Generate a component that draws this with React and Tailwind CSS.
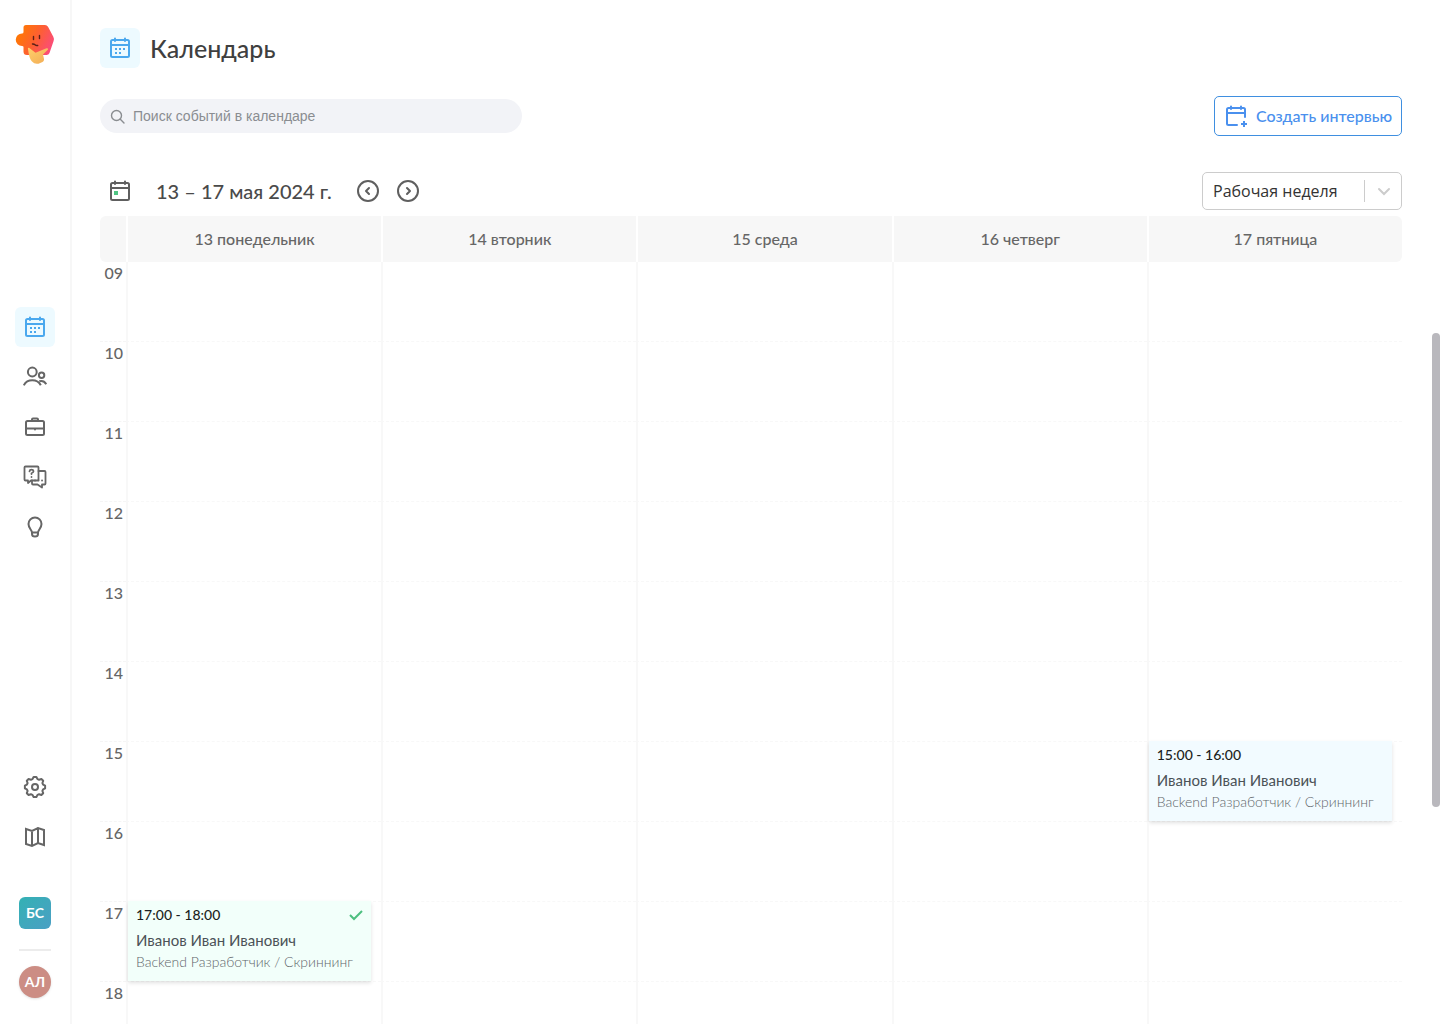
import clsx from "clsx";

const strokeProps = {
  width: 24,
  height: 24,
  viewBox: "0 0 24 24",
  fill: "none",
  stroke: "currentColor",
  strokeWidth: 2,
  strokeLinecap: "round",
  strokeLinejoin: "round",
  "aria-hidden": true,
};

function CalendarIcon() {
  return (
    <svg {...strokeProps}>
      <rect x="3" y="4" width="18" height="17" rx="1.5" />
      <path d="M3 9h18M7 2.500V5M17 2.500V5" />
      <path d="M7 13h2M11 13h2M15 13h2M7 17h2M11 17h2" strokeLinecap="butt" />
    </svg>
  );
}

function TodayIcon() {
  return (
    <svg {...strokeProps}>
      <rect x="3" y="4" width="18" height="17" rx="1.5" />
      <path d="M3 9h18M7 2.500V5M17 2.500V5" />
      <rect x="6" y="12" width="4" height="4" fill="#4fc583" stroke="none" />
    </svg>
  );
}

function CalendarAddIcon() {
  return (
    <svg {...strokeProps}>
      <path d="M13 21H4.500Q3 21 3 19.500V5.500Q3 4 4.500 4h15Q21 4 21 5.500V13" />
      <path d="M3 9h18M7 2.500V5M17 2.500V5" />
      <path d="M17 20h6M20 17v6" strokeLinecap="butt" />
    </svg>
  );
}

function PeopleIcon() {
  return (
    <svg {...strokeProps} strokeLinecap="butt">
      <circle cx="9.300" cy="7" r="4.400" />
      <path d="M.8 20.300c1.700-3.300 4.800-5 8.500-5s6.800 1.700 8.500 5" />
      <circle cx="18.600" cy="10.200" r="2.700" />
      <path d="M16.300 16.300c2.800-.9 5.400.2 7 2.900" />
    </svg>
  );
}

function BriefcaseIcon() {
  return (
    <svg {...strokeProps}>
      <rect x="3" y="6" width="18" height="14" rx="1.500" />
      <path d="M9 6V4.500q0-1 1-1h4q1 0 1 1V6M3 13.500h18M12 13.500v1" />
    </svg>
  );
}

function QuestionsIcon() {
  return (
    <svg {...strokeProps} strokeWidth={1.8}>
      <path d="M5 15.500H2.500q-1 0-1-1V2.500q0-1 1-1h12q1 0 1 1v12q0 1-1 1H8L5 18z" />
      <path d="M15.500 6H21.500q1 0 1 1v11.500q0 1-1 1h-2.500v3l-4.500-3H10q-1 0-1-1v-3" />
      <path d="M6.500 6.300q.2-1.700 2-1.700t2 1.600q0 1.200-2 2.100v.8M8.500 12v.1" />
      <path d="M12 15.500h.1M15.500 15.500h.1M19 15.500h.1" />
    </svg>
  );
}

function BulbIcon() {
  return (
    <svg {...strokeProps}>
      <path d="M9 17.500c0-2.500-3.500-4-3.500-8.500a6.500 6.500 0 0 1 13 0c0 4.500-3.500 6-3.500 8.500zM9 17.500v1.500a3 2.500 0 0 0 6 0v-1.500" />
    </svg>
  );
}

function GearIcon() {
  return (
    <svg {...strokeProps}>
      <circle cx="12" cy="12" r="3" />
      <path d="M10.600 2h2.800l1.100 2.100 1.600.6 2.300-.7 1.800 1.800-.8 2.200.7 1.600 2 1v2.800l-2 1-.7 1.600.8 2.200-1.800 1.800-2.300-.7-1.600.6-1.100 2.100h-2.800l-1.100-2.100-1.600-.6-2.300.7-1.800-1.800.8-2.200-.7-1.600-2-1v-2.800l2-1 .7-1.600-.8-2.200L5.600 4l2.300.7 1.600-.6z" />
    </svg>
  );
}

function MapIcon() {
  return (
    <svg {...strokeProps}>
      <path d="M3 4l6 2 6-3 6 2v15l-6-2-6 3-6-2zM9 6v15M15 3v15" strokeLinejoin="miter" />
    </svg>
  );
}

function ArrowIcon({ d }) {
  return (
    <svg {...strokeProps}>
      <circle cx="12" cy="12" r="10" />
      <path d={d} />
    </svg>
  );
}

function Logo() {
  return (
    <svg width="40" height="40" viewBox="0 0 40 40" aria-hidden="true">
      <defs>
        <linearGradient id="logo-face" x1="0" y1="0.300" x2="1" y2="0.700">
          <stop offset="0" stopColor="#ff7a00" />
          <stop offset="0.500" stopColor="#fd6030" />
          <stop offset="1" stopColor="#fb4a80" />
        </linearGradient>
        <linearGradient id="logo-hand" x1="0" y1="0" x2="1" y2="1">
          <stop offset="0" stopColor="#ffd06a" />
          <stop offset="1" stopColor="#f2ab55" />
        </linearGradient>
      </defs>
      <path
        d="M11 1h19q2 0 3 1.700l5.300 10q1.200 2.300.3 4.300L34.500 29q-.8 2-3 2H12q-3.500 0-3.500-3.500V23Q8.500 22 7 22A6.200 6.200 0 0 1 7 9.500Q8.500 9.500 8.500 8V3.500Q8.500 1 11 1z"
        fill="url(#logo-face)"
      />
      <path
        d="M13 25q-.5-1.500 1-1.300l6.500 5 11-4.500q2.300-.2 1.300 1.500L28 30.500l1 4.500q.3 2-1.500 3l-4 1.700q-4 .8-6.500-2.200-3-3-4-12.500z"
        fill="url(#logo-hand)"
      />
      <path
        d="M18.500 12.500v3M24.500 11.500v3M17.500 20q1.500-.2 2.500.8t2.700.7"
        fill="none"
        stroke="#5b2018"
        strokeWidth="1.400"
        strokeLinecap="round"
      />
    </svg>
  );
}

const mainLinks = [
  { label: "Календарь", icon: CalendarIcon, active: true },
  { label: "Кандидаты", icon: PeopleIcon },
  { label: "Вакансии", icon: BriefcaseIcon },
  { label: "Вопросы", icon: QuestionsIcon },
  { label: "Идеи", icon: BulbIcon },
];

const bottomLinks = [
  { label: "Настройки", icon: GearIcon },
  { label: "Карта", icon: MapIcon },
];

const days = ["13 понедельник", "14 вторник", "15 среда", "16 четверг", "17 пятница"];
const hours = ["09", "10", "11", "12", "13", "14", "15", "16", "17", "18"];

const events = [
  { day: 4, hour: "15", time: "15:00 - 16:00", done: false },
  { day: 0, hour: "17", time: "17:00 - 18:00", done: true },
];

function NavLinks({ links }) {
  return (
    <ul className="flex flex-col gap-[10px]">
      {links.map(({ label, icon: Icon, active }) => (
        <li key={label}>
          <a
            href="#"
            aria-label={label}
            className={clsx(
              "flex size-10 items-center justify-center rounded-md",
              active ? "bg-[#edfaff] text-[#4aa8ee]" : "text-[#666]"
            )}
          >
            <Icon />
          </a>
        </li>
      ))}
    </ul>
  );
}

function Sidebar() {
  return (
    <aside className="flex w-[72px] shrink-0 flex-col items-center justify-between border-r-2 border-[#f7f7f7] pt-6 pb-[26px]">
      <a href="#" aria-label="Главная" className="mb-[22px]">
        <Logo />
      </a>
      <nav>
        <NavLinks links={mainLinks} />
      </nav>
      <div className="flex flex-col items-center">
        <NavLinks links={bottomLinks} />
        <button className="mt-10 size-8 rounded-md bg-linear-to-br from-[#32b1b4] to-[#4a9fc4] text-sm font-bold text-white">
          БС
        </button>
        <hr className="mt-5 mb-[15px] h-[2px] w-8 border-0 bg-[#ececec]" />
        <button className="size-8 rounded-full bg-[#cc8d84] text-sm font-bold text-white shadow-sm">
          АЛ
        </button>
      </div>
    </aside>
  );
}

function EventCard({ event }) {
  return (
    <article
      className={clsx(
        "absolute -top-px right-[10px] left-0 h-20 px-2 py-1 shadow-[0_2px_4px_rgba(0,0,0,0.12)]",
        event.done ? "bg-[#f2fffa]" : "bg-[#f2fbff]"
      )}
    >
      <div className="flex items-center justify-between">
        <time className="text-sm leading-5 font-medium text-[#1c1f22]">{event.time}</time>
        {event.done && (
          <svg width="14" height="12" viewBox="0 0 14 12" fill="none" stroke="#4cbf7f" strokeWidth="2" aria-hidden="true">
            <path d="M1 6l4 4 8-8" />
          </svg>
        )}
      </div>
      <p className="mt-[5px] text-[15px] leading-[21px] whitespace-nowrap text-[#4b5257]">Иванов Иван Иванович</p>
      <p className="text-sm leading-[21px] font-light whitespace-nowrap text-[#5f666a]">Backend Разработчик / Скриннинг</p>
    </article>
  );
}

function WeekTable() {
  return (
    <table className="w-full table-fixed border-separate border-spacing-0">
      <colgroup>
        <col className="w-[26px]" />
        {days.map((day) => (
          <col key={day} />
        ))}
      </colgroup>
      <thead>
        <tr>
          <td className="h-[46px] rounded-l-md bg-[#f7f7f7]" />
          {days.map((day) => (
            <th
              key={day}
              scope="col"
              className="h-[46px] border-l-2 border-white bg-[#f7f7f7] p-0 text-base font-medium text-[#666] last:rounded-r-md"
            >
              {day}
            </th>
          ))}
        </tr>
      </thead>
      <tbody>
        {hours.map((hour) => (
          <tr key={hour}>
            <th scope="row" className="h-20 border-b border-dashed border-[#f5f5f5] p-0 text-right align-top text-base font-medium text-[#666]">
              <span className="block pr-[3px] leading-[22px]">{hour}</span>
            </th>
            {days.map((day, i) => {
              const event = events.find((e) => e.day === i && e.hour === hour);
              return (
                <td key={day} className="relative h-20 border-b border-l-2 border-[#f8f8f8] p-0 [border-bottom-style:dashed]">
                  {event && <EventCard event={event} />}
                </td>
              );
            })}
          </tr>
        ))}
      </tbody>
    </table>
  );
}

export default function App() {
  return (
    <div className="relative flex h-screen overflow-hidden bg-white font-['Lato','Noto_Sans',sans-serif] text-[#3f3f3f]">
      <Sidebar />
      <main className="min-w-0 flex-1 overflow-hidden pt-7 pr-[38px] pl-7">
        <header className="flex items-center gap-[10px]">
          <span className="flex size-10 items-center justify-center rounded-md bg-[#edfaff] text-[#4aa8ee]">
            <CalendarIcon />
          </span>
          <h1 className="text-[25px] leading-10 font-medium">Календарь</h1>
        </header>

        <div className="mt-7 flex items-center justify-between">
          <label className="flex h-[34px] w-[422px] items-center gap-2 rounded-full bg-[#f2f3f7] px-[10px] text-[#8a8d91]">
            <svg width="15" height="15" viewBox="0 0 15 15" fill="none" stroke="currentColor" strokeWidth="1.400" strokeLinecap="round" aria-hidden="true">
              <circle cx="6.500" cy="6.500" r="5" />
              <path d="M10.300 10.300L14 14" />
            </svg>
            <input
              type="search"
              aria-label="Поиск событий в календаре"
              placeholder="Поиск событий в календаре"
              className="flex-1 bg-transparent font-['Liberation_Sans',sans-serif] text-sm outline-none placeholder:text-[#8a8d91]"
            />
          </label>
          <button className="flex h-10 items-center gap-2 rounded-[5px] border border-[#3f8fe0] px-[9px] text-base font-medium text-[#4a90ee]">
            <CalendarAddIcon />
            Создать интервью
          </button>
        </div>

        <div className="mt-[35px] mb-[5px] flex items-center justify-between">
          <div className="flex items-center text-[#5f5f5f]">
            <button aria-label="Сегодня" className="flex size-10 items-center justify-center">
              <TodayIcon />
            </button>
            <h2 className="ml-4 text-xl font-medium text-[#4a4a4a]">13 – 17 мая 2024 г.</h2>
            <button aria-label="Назад" className="ml-6">
              <ArrowIcon d="M13 9l-3 3 3 3" />
            </button>
            <button aria-label="Вперёд" className="ml-4">
              <ArrowIcon d="M11 9l3 3-3 3" />
            </button>
          </div>
          <div className="relative">
            <select
              aria-label="Период"
              className="h-[38px] w-[200px] appearance-none rounded-[5px] border border-[#ccc] bg-white px-[10px] font-['Open_Sans',sans-serif] text-base text-[#333]"
            >
              <option>Рабочая неделя</option>
            </select>
            <span className="pointer-events-none absolute inset-y-2 right-0 flex w-[38px] items-center justify-center border-l border-[#ccc] text-[#ccc]">
              <svg width="14" height="9" viewBox="0 0 14 9" fill="none" stroke="currentColor" strokeWidth="2" strokeLinecap="round" aria-hidden="true">
                <path d="M2 2l5 5 5-5" />
              </svg>
            </span>
          </div>
        </div>

        <WeekTable />
      </main>
      {/* scroll thumb */}
      <div className="absolute top-[333px] right-0 h-[474px] w-2 rounded-full bg-[#b9b8bd]" />
    </div>
  );
}
